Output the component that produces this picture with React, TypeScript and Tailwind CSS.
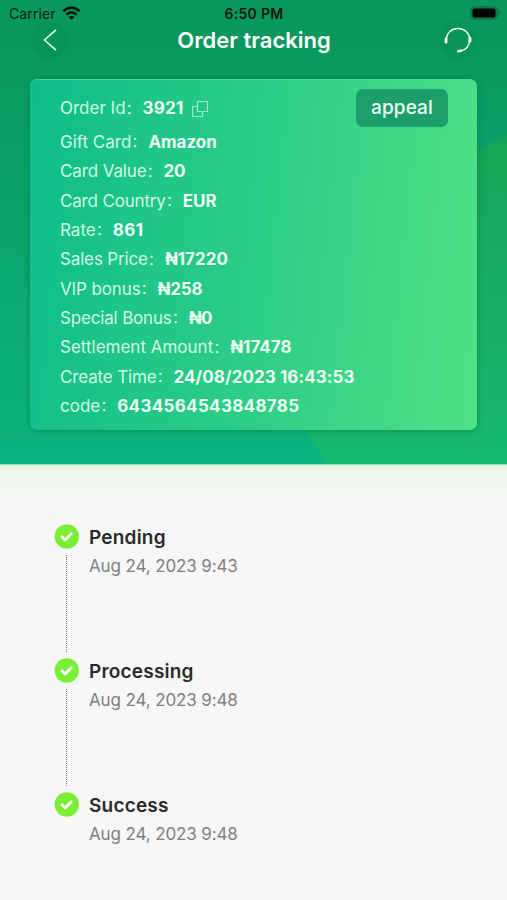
import { Fragment } from 'react'
import clsx from 'clsx'

interface Detail {
  label: string
  value: string
  labelClass?: string
  valueClass?: string
}

const details: Detail[] = [
  { label: 'Gift Card', value: 'Amazon' },
  { label: 'Card Value', value: '20', labelClass: 'tracking-[-0.12px]', valueClass: 'tracking-[-0.2px]' },
  { label: 'Card Country', value: 'EUR', labelClass: 'tracking-[-0.17px]' },
  { label: 'Rate', value: '861', valueClass: 'tracking-[0.4px]' },
  { label: 'Sales Price', value: '₦17220', labelClass: 'tracking-[-0.15px]' },
  { label: 'VIP bonus', value: '₦258', labelClass: 'tracking-[-0.12px]', valueClass: 'tracking-[-0.2px]' },
  { label: 'Special Bonus', value: '₦0', labelClass: 'tracking-[-0.17px]', valueClass: 'tracking-[-0.5px]' },
  { label: 'Settlement Amount', value: '₦17478' },
  { label: 'Create Time', value: '24/08/2023 16:43:53', labelClass: 'tracking-[-0.15px]', valueClass: 'tracking-[0.08px]' },
  { label: 'code', value: '6434564543848785', valueClass: 'tracking-[0.32px]' },
]

const steps = [
  { title: 'Pending', time: 'Aug 24, 2023 9:43' },
  { title: 'Processing', time: 'Aug 24, 2023 9:48' },
  { title: 'Success', time: 'Aug 24, 2023 9:48' },
]

function StatusBar() {
  return (
    <div className="grid h-[26px] grid-cols-3 items-center pl-[9px] pr-[6px] text-[14px] text-black/80">
      <div className="flex items-center gap-[6px]">
        <span className="tracking-[0.1px]">Carrier</span>
        <svg width="19" height="14" viewBox="0 0 19 14" fill="none" stroke="#04130c" strokeWidth="2.6">
          <path d="M1.3 5.2C6 .6 13 .6 17.7 5.2" />
          <path d="M4.4 8.6c3-2.8 7.2-2.8 10.2 0" />
          <path d="M9.5 13.8 6.6 11c1.6-1.5 4.2-1.5 5.8 0Z" fill="#04130c" stroke="none" />
        </svg>
      </div>
      <span className="-ml-[2px] text-center font-semibold tracking-[0.3px] text-black/85">6:50 PM</span>
      <div className="flex justify-end">
        <svg width="31" height="14" viewBox="0 0 31 14">
          <rect x="0.7" y="0.7" width="26.6" height="12.6" rx="3.6" fill="#087d4e" stroke="#067346" />
          <rect x="2.5" y="2.5" width="23" height="9" rx="2" fill="#000" />
          <path d="M29 5v4c1.3-.6 1.3-3.4 0-4Z" fill="#06633d" />
        </svg>
      </div>
    </div>
  )
}

function TitleBar() {
  return (
    <div className="flex h-[38px] items-start justify-between pl-[31px] pr-[30px]">
      <button className="-mt-[5px] flex size-[38px] items-center justify-center rounded-full bg-[#058952]/30" aria-label="Back">
        <svg width="14" height="22" viewBox="0 0 14 22" fill="none" stroke="#d9fbe9" strokeWidth="1.6">
          <path d="M13 .8 1.5 11 13 21.2" />
        </svg>
      </button>
      <h1 className="text-[22px] leading-7 font-semibold text-white">Order tracking</h1>
      <button className="-mt-[5px] flex size-[38px] items-center justify-center rounded-full bg-[#058952]/20" aria-label="Support">
        <svg width="30" height="26" viewBox="0 0 30 26" fill="none" stroke="#f0fff7" strokeLinecap="round">
          <path d="M3.4 12.5C3.6 6 8.6 1.5 15 1.5S26.4 6 26.6 12.5C26.4 18.5 23 23 17.5 24" strokeWidth="1.5" />
          <path d="M3 12.2v3M27 11.2v3" strokeWidth="2.8" />
          <path d="M15.3 24.2 18 23.8" strokeWidth="2.6" />
        </svg>
      </button>
    </div>
  )
}

function Colon() {
  return <span className="mr-[2px] text-[15px] text-[#d3f9e6]">：</span>
}

function DetailRow({ label, value, labelClass, valueClass }: Detail) {
  return (
    <p className="flex h-[29.33px] items-center whitespace-nowrap">
      <span className={clsx('text-[#d3f9e6]', labelClass)}>{label}</span>
      <Colon />
      <span className={clsx('font-bold text-[#ecfff5]', valueClass)}>{value}</span>
    </p>
  )
}

function OrderCard() {
  return (
    <section className="mx-[30px] mt-[15px] h-[351px] rounded-[7px] border-t border-[#3ddb92] bg-linear-[96deg,#0ebd89,#2ccd86_50%,#4fe186] pl-[30px] pr-[29px] text-[17px] shadow-[0_1px_6px_rgba(0,75,45,0.35)]">
      <div className="flex h-[48px] items-start justify-between">
        <div className="flex h-[58px] items-center">
          <span className="text-[#d3f9e6]">Order Id</span>
          <Colon />
          <span className="font-bold tracking-[0.2px] text-[#ecfff5]">3921</span>
          <svg className="ml-[9px]" width="16" height="16" viewBox="0 0 16 16" fill="none" stroke="#9ceccb" strokeWidth="1.2">
            <path d="M5.5.5h10v10h-10z" />
            <path d="M5.5 5.5h-5v10h10v-5" />
          </svg>
        </div>
        <button className="mt-[9px] flex h-[38px] w-[92px] items-center justify-center rounded-[7px] bg-[#1b9e69] pt-px text-[19px] font-medium tracking-[0.1px] text-[#effff6]">appeal</button>
      </div>
      {details.map((detail) => (
        <DetailRow key={detail.label} {...detail} />
      ))}
    </section>
  )
}

function Timeline() {
  return (
    <section className="grid grid-cols-[25px_1fr] gap-x-[10px] pl-[54px] pt-[59px]">
      {steps.map((step, index) => (
        <Fragment key={step.title}>
          <div className="flex h-[134.2px] flex-col items-center">
            <svg className="shrink-0" width="25" height="25" viewBox="0 0 25 25">
              <circle cx="12.8" cy="12.5" r="12.2" fill="#7bee36" />
              <path d="m8 12.7 3.2 3.3 6-6.3" fill="none" stroke="#fff" strokeWidth="2.8" strokeLinecap="round" strokeLinejoin="round" />
            </svg>
            {index < steps.length - 1 && <div className="mt-[6px] h-[97px] border-l border-dotted border-[#777]" />}
          </div>
          <div className="pt-px">
            <h2 className="text-[19px] leading-[26px] font-semibold tracking-[0.2px] text-[#2a2a2a]">{step.title}</h2>
            <p className="mt-[3px] text-[17px] leading-6 tracking-[-0.13px] text-[#808080]">{step.time}</p>
          </div>
        </Fragment>
      ))}
    </section>
  )
}

export default function App() {
  return (
    <div className="h-[900px] w-full overflow-hidden bg-[#f7f7f7] font-[Inter,'Noto_Sans_CJK_SC',sans-serif]">
      <header className="relative isolate h-[465px] border-b border-[#8be4bd] bg-linear-to-b from-[#08965c] to-[#0cb37e]">
        <svg className="absolute inset-0 -z-10" width="507" height="464" viewBox="0 0 507 464">
          <defs>
            <linearGradient id="glow" x1="0" y1="0" x2="0" y2="1">
              <stop offset="0" stopColor="#16a357" />
              <stop offset="1" stopColor="#16b96e" />
            </linearGradient>
          </defs>
          <path d="M507 135C400 185 255 325 311 437L327 464H507Z" fill="url(#glow)" />
        </svg>
        <StatusBar />
        <TitleBar />
        <OrderCard />
      </header>
      <main className="h-[435px] bg-linear-to-b from-[#eaf6e5] to-[#f7f7f7] to-[26px]">
        <Timeline />
      </main>
    </div>
  )
}
